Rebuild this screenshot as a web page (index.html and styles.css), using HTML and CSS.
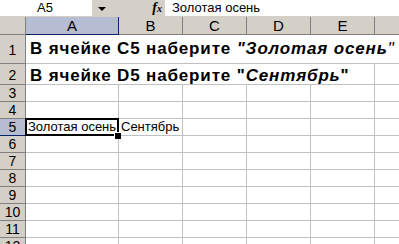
FILE: index.html
```html
<html>
<head>
  <meta charset="utf-8">
  <title>Excel</title>
  <link rel="stylesheet" href="styles.css">
</head>
<body>
  <div class="formula-bar">
    <div class="name-box">A5</div>
    <div class="name-drop"><span class="arrow"></span></div>
    <div class="fx"><i>f</i><span>x</span></div>
    <div class="formula">Золотая осень</div>
  </div>
  <div class="sheet">
    <div class="corner"></div>
    <div class="colhead sel">A</div>
    <div class="colhead">B</div>
    <div class="colhead">C</div>
    <div class="colhead">D</div>
    <div class="colhead">E</div>
    <div class="colhead last"></div>

    <div class="rowhead r1">1</div>
    <div class="cell big r1 span-all">В ячейке C5 наберите <b><i>"Золотая осень</i></b><i class="q">"</i></div>

    <div class="rowhead r2">2</div>
    <div class="cell big r2 span-ae">В ячейке D5 наберите "<i>Сентябрь</i>"</div>
    <div class="cell r2 last"></div>

    <div class="rowhead">3</div>
    <div class="cell"></div><div class="cell"></div><div class="cell"></div><div class="cell"></div><div class="cell"></div><div class="cell last"></div>

    <div class="rowhead">4</div>
    <div class="cell"></div><div class="cell"></div><div class="cell"></div><div class="cell"></div><div class="cell"></div><div class="cell last"></div>

    <div class="rowhead sel">5</div>
    <div class="cell active">Золотая осень</div><div class="cell">Сентябрь</div><div class="cell"></div><div class="cell"></div><div class="cell"></div><div class="cell last"></div>

    <div class="rowhead">6</div>
    <div class="cell"></div><div class="cell"></div><div class="cell"></div><div class="cell"></div><div class="cell"></div><div class="cell last"></div>

    <div class="rowhead">7</div>
    <div class="cell"></div><div class="cell"></div><div class="cell"></div><div class="cell"></div><div class="cell"></div><div class="cell last"></div>

    <div class="rowhead">8</div>
    <div class="cell"></div><div class="cell"></div><div class="cell"></div><div class="cell"></div><div class="cell"></div><div class="cell last"></div>

    <div class="rowhead">9</div>
    <div class="cell"></div><div class="cell"></div><div class="cell"></div><div class="cell"></div><div class="cell"></div><div class="cell last"></div>

    <div class="rowhead">10</div>
    <div class="cell"></div><div class="cell"></div><div class="cell"></div><div class="cell"></div><div class="cell"></div><div class="cell last"></div>

    <div class="rowhead">11</div>
    <div class="cell"></div><div class="cell"></div><div class="cell"></div><div class="cell"></div><div class="cell"></div><div class="cell last"></div>

    <div class="rowhead">12</div>
    <div class="cell"></div><div class="cell"></div><div class="cell"></div><div class="cell"></div><div class="cell"></div><div class="cell last"></div>
  </div>
</body>
</html>
```

FILE: styles.css
```css
* { box-sizing: border-box; }
body {
  margin: 0;
  width: 399px;
  height: 244px;
  overflow: hidden;
  background: #fff;
  font-family: "Liberation Sans", Arial, sans-serif;
  font-size: 13px;
  color: #000;
}

/* formula bar */
.formula-bar {
  display: flex;
  height: 17px;
  background: #d4d0c8;
  border-bottom: 1px solid #d4d0c8;
}
.name-box {
  width: 92px;
  background: #fff;
  text-align: center;
  line-height: 16px;
  padding-right: 2px;
}
.name-drop {
  width: 20px;
  display: flex;
  align-items: center;
  justify-content: center;
  padding-top: 1px;
}
.arrow {
  width: 0;
  height: 0;
  border-left: 4px solid transparent;
  border-right: 4px solid transparent;
  border-top: 4px solid #000;
}
.fx {
  width: 53px;
  text-align: right;
  padding-right: 3px;
  font-family: "Liberation Serif", serif;
  font-weight: bold;
  font-size: 13px;
  line-height: 16px;
}
.fx i { font-size: 14px; }
.fx span { font-style: italic; font-size: 10px; }
.formula {
  flex: 1;
  background: #fff;
  padding-left: 7px;
  line-height: 16px;
}

/* sheet grid */
.sheet {
  display: grid;
  grid-template-columns: 26px 93px 64px 64px 64px 64px 1fr;
  grid-template-rows: 18px 29px 21px repeat(10, 17px);
}
.corner, .colhead, .rowhead {
  background: #d4d0c8;
  border-right: 1px solid #808080;
  border-bottom: 1px solid #808080;
}
.colhead {
  text-align: center;
  font-size: 15px;
  line-height: 17px;
}
.colhead.last { border-right: none; }
.colhead.sel {
  background: #b6bdd2;
  border-right-color: #0a246a;
  border-bottom-color: #0a246a;
}
.rowhead {
  text-align: center;
  line-height: 16px;
  font-size: 14px;
}
.rowhead.r1 { line-height: 30px; }
.rowhead.r2 { line-height: 22px; }
.rowhead.sel {
  background: #b6bdd2;
  border-bottom-color: #0a246a;
}
.cell {
  border-right: 1px solid #c0c0c0;
  border-bottom: 1px solid #c0c0c0;
  padding-left: 2px;
  white-space: nowrap;
  line-height: 16px;
}
.cell.last { border-right: none; }
.big {
  font-size: 17px;
  font-weight: bold;
  letter-spacing: 0.85px;
  padding-left: 4px;
  overflow: visible;
}
.cell.r1 { line-height: 27px; }
.cell.r2 { line-height: 23px; }
.span-all { grid-column: 2 / 8; border-right: none; }
.span-ae { grid-column: 2 / 7; }
.q { font-weight: normal; }

.active { position: relative; }
.active::before {
  content: "";
  position: absolute;
  left: -1px;
  top: -1px;
  right: -1px;
  bottom: -1px;
  border: 2px solid #000;
}
.active::after {
  content: "";
  position: absolute;
  right: -3px;
  bottom: -4px;
  width: 6px;
  height: 6px;
  background: #000;
  border-left: 1px solid #fff;
  border-top: 1px solid #fff;
}
```
